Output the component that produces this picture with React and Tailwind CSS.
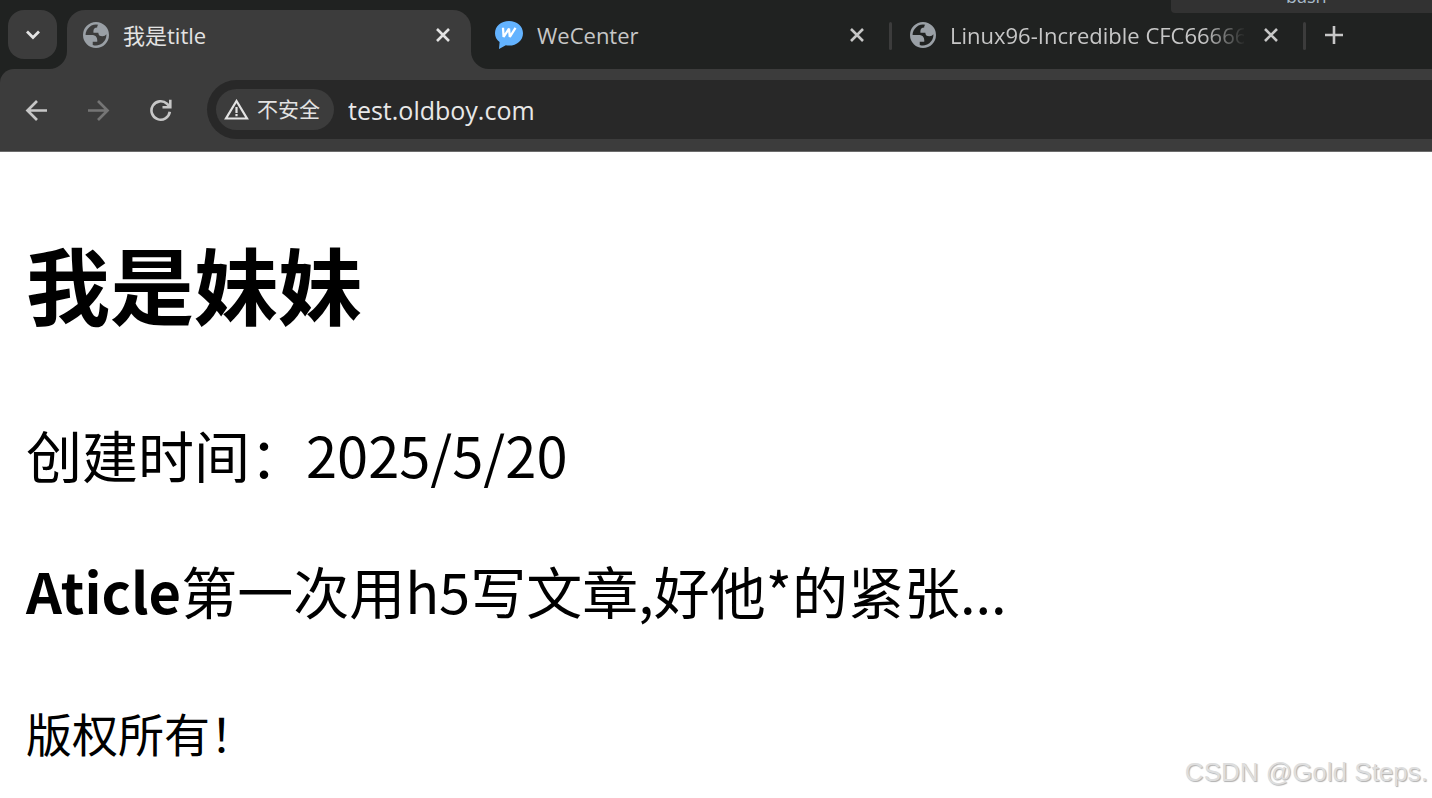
const uiFont = "font-['Open_Sans','Noto_Sans_CJK_SC',sans-serif]";

function GlobeIcon() {
  return (
    <svg className="size-[26px] shrink-0" viewBox="2 2 20 20" fill="#9aa0a6" fillRule="evenodd" aria-hidden="true">
      <path d="M12 2a10 10 0 1 0 0 20 10 10 0 0 0 0-20zM4 12h4.400c3.407.022 4.922 1.730 4.543 5.127H9.488v2.470a8.004 8.004 0 0 0 10.498-8.083C19.327 12.504 18.332 13 17 13c-2.137 0-3.206-.916-3.206-2.750h-3.748c-.274-2.728.683-4.092 2.870-4.092 0-.975.327-1.597.811-1.970A8.004 8.004 0 0 0 4 12z" />
    </svg>
  );
}

function CloseButton({ label, tone }) {
  return (
    <button type="button" aria-label={label} className={`grid size-6 shrink-0 place-items-center ${tone}`}>
      <svg className="size-4" viewBox="0 0 16 16" fill="none" stroke="currentColor" strokeWidth="2.6" aria-hidden="true">
        <path d="M2 2l12 12M14 2L2 14" />
      </svg>
    </button>
  );
}

function WeCenterIcon() {
  return (
    <svg className="size-7 shrink-0" viewBox="0 0 28 28" aria-hidden="true">
      <path d="M14 0C6 0 0 5.200 0 12.200c0 3.600 1.600 6.600 4.600 8.800L4 28l6.800-3.700c1 .2 2.100.3 3.200.3 8 0 14-5.400 14-12.400S22 0 14 0z" fill="#63b3ff" />
      <path d="M8 6.800l.6 9.200L14 7.600l.8 8.400L20.500 6.800" fill="none" stroke="#fff" strokeWidth="2.300" strokeLinejoin="bevel" />
    </svg>
  );
}

function Tab({ icon, title, titleClass }) {
  return (
    <div className="flex h-[50px] min-w-0 items-center">
      {icon}
      <span className={`overflow-hidden whitespace-nowrap ${titleClass}`}>{title}</span>
    </div>
  );
}

export default function App() {
  return (
    <div className="min-h-screen overflow-x-hidden bg-white text-black">
      <header className={uiFont}>
        <div className="relative flex h-[69px] bg-[#202221] pl-2 pt-[10px] text-[22px] text-[#c7c7c7]">
          <button type="button" aria-label="Search tabs" className="grid size-[49px] shrink-0 place-items-center rounded-2xl bg-[#3c3c3c] text-[#e3e3e3]">
            <svg className="h-[10px] w-4" viewBox="0 0 16 10" fill="none" stroke="currentColor" strokeWidth="2.800" aria-hidden="true">
              <path d="M2 1.500l6 6 6-6" />
            </svg>
          </button>
          <div className="relative ml-[10px] flex h-[59px] w-[404px] shrink-0 rounded-t-[18px] bg-[#3c3c3c] pl-4 pr-4 text-[#e3e3e3]">
            <svg className="absolute bottom-0 -left-[18px] size-[18px]" viewBox="0 0 18 18" aria-hidden="true">
              <path d="M18 0v18H0A18 18 0 0 0 18 0z" fill="#3c3c3c" />
            </svg>
            <svg className="absolute bottom-0 -right-[18px] size-[18px]" viewBox="0 0 18 18" aria-hidden="true">
              <path d="M0 0v18h18A18 18 0 0 1 0 0z" fill="#3c3c3c" />
            </svg>
            <div className="flex h-[50px] w-full items-center justify-between">
              <Tab icon={<GlobeIcon />} title="我是title" titleClass="ml-[14px]" />
              <CloseButton label="Close 我是title" tone="text-[#e3e3e3]" />
            </div>
          </div>
          <div className="ml-6 flex h-[50px] w-[374px] shrink-0 items-center justify-between">
            <Tab icon={<WeCenterIcon />} title="WeCenter" titleClass="ml-[14px]" />
            <CloseButton label="Close WeCenter" tone="text-[#c7c7c7]" />
          </div>
          <div className="ml-5 mt-3 h-7 w-[3px] shrink-0 rounded-full bg-[#3c3c3c]" />
          <div className="ml-[18px] flex h-[50px] w-[373px] shrink-0 items-center justify-between">
            <Tab
              icon={<GlobeIcon />}
              title="Linux96-Incredible CFC66666"
              titleClass="ml-[14px] w-[294px] [mask-image:linear-gradient(to_right,black_254px,transparent_296px)]"
            />
            <CloseButton label="Close Linux96-Incredible" tone="text-[#c7c7c7]" />
          </div>
          <div className="ml-5 mt-3 h-7 w-[3px] shrink-0 rounded-full bg-[#3c3c3c]" />
          <button type="button" aria-label="New tab" className="ml-4 grid h-[50px] w-6 shrink-0 place-items-center text-[#c7c7c7]">
            <svg className="size-[18px]" viewBox="0 0 18 18" fill="none" stroke="currentColor" strokeWidth="2.600" aria-hidden="true">
              <path d="M9 0v18M0 9h18" />
            </svg>
          </button>
          <div className="absolute right-0 top-0 flex h-[13px] w-[261px] items-end overflow-hidden rounded-bl bg-[#323232] pb-[7px] pl-[115px] text-[18px] leading-5 text-[#a9bccb]">
            <span>bash</span>
          </div>
        </div>
        <div className="bg-[#202221]">
          <div className="flex h-[83px] items-center rounded-tl-[14px] border-b border-[#6b6b6b] bg-[#3c3c3c] pb-px">
            <nav className="flex shrink-0 items-center gap-[38px] pl-[25px]" aria-label="Navigation">
              <button type="button" aria-label="Back" className="text-[#c7c7c7]">
                <svg className="size-6" viewBox="0 0 24 24" fill="none" stroke="currentColor" strokeWidth="2.700" aria-hidden="true">
                  <path d="M22 12.500H2.500M12 3l-9.500 9.500L12 22" />
                </svg>
              </button>
              <button type="button" aria-label="Forward" className="text-[#757575]">
                <svg className="size-6" viewBox="0 0 24 24" fill="none" stroke="currentColor" strokeWidth="2.700" aria-hidden="true">
                  <path d="M1 12.500h19.500M11 3l9.500 9.500L11 22" />
                </svg>
              </button>
              <button type="button" aria-label="Reload" className="text-[#c7c7c7]">
                <svg className="size-6" viewBox="0 0 24 24" fill="none" stroke="currentColor" strokeWidth="2.600" aria-hidden="true">
                  <path d="M20.800 13.800A9.200 9.200 0 1 1 18 5.800L20.800 8.600M21.300 1.800v7.500H13.500" />
                </svg>
              </button>
            </nav>
            <div className="ml-[34px] flex h-[59px] min-w-0 flex-1 items-center rounded-l-full bg-[#282828] pl-[9px]">
              <button type="button" className="flex h-[41px] w-[118px] shrink-0 items-center gap-2 rounded-full bg-[#3c3c3c] pl-2 text-[21px] text-[#e3e3e3]">
                <svg className="h-[21px] w-[25px] shrink-0" viewBox="0 0 25 21" fill="none" stroke="currentColor" strokeWidth="2.200" aria-hidden="true">
                  <path d="M12.500 2L2 19.500h21zM12.500 8v6M12.500 15v2.300" />
                </svg>
                <span>不安全</span>
              </button>
              <input
                type="text"
                aria-label="Address"
                defaultValue="test.oldboy.com"
                className="ml-[14px] h-10 min-w-0 flex-1 bg-transparent text-[25px] text-[#e8e8e8] outline-none"
              />
            </div>
          </div>
        </div>
      </header>
      <main className="px-[26px] pt-[71px] font-['Noto_Sans_CJK_SC',sans-serif] text-[56px] leading-[80px]">
        <h1 className="text-[84px] font-bold leading-[120px]">我是妹妹</h1>
        <p className="mt-[71px]">创建时间：2025/5/20</p>
        <p className="mt-14">
          <strong className="font-bold">Aticle</strong>第一次用h5写文章,好他*的紧张...
        </p>
        <footer className="mt-[68px] text-[46px] leading-[68px]">版权所有！</footer>
      </main>
      <div className="pointer-events-none absolute bottom-2 right-1 font-['Liberation_Sans',sans-serif] text-[26px] leading-9 text-[#dedede] [text-shadow:1px_1px_1px_#b0b0b0]">
        CSDN @Gold Steps.
      </div>
    </div>
  );
}
